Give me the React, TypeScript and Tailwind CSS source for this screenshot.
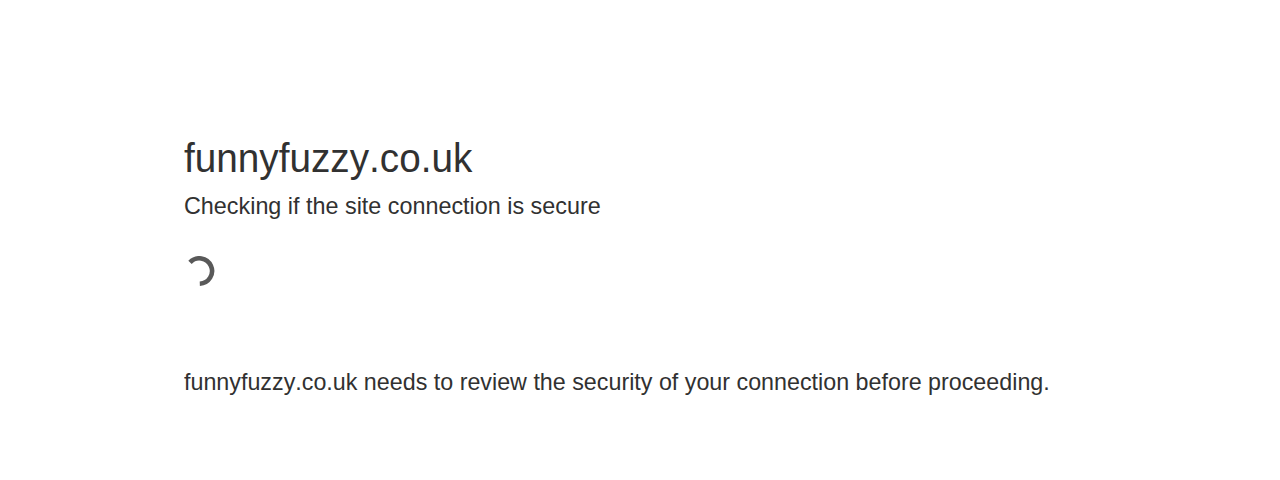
// Interstitial page shown while the connection is being verified

const HOST = 'funnyfuzzy.co.uk';

function Spinner() {
  return (
    <svg width="32" height="30" viewBox="0 0 32 30" fill="none" role="status" aria-label="Loading">
      <path d="M6 6.4 A12.7 12.7 0 1 1 15.8 27.7" stroke="#595959" strokeWidth="4.6" />
    </svg>
  );
}

export default function App() {
  return (
    <main className="h-[480px] overflow-hidden bg-white px-[184px] pt-[129px] font-['Liberation_Sans',Arial,sans-serif] text-[#313131] [font-kerning:none]">
      <h1 className="origin-left scale-x-[0.968] text-[40px] leading-[59px]">{HOST}</h1>
      <h2 className="origin-left scale-x-[0.973] text-2xl leading-9">Checking if the site connection is secure</h2>
      <div className="mt-8 mb-[78px]">
        <Spinner />
      </div>
      <p className="origin-left scale-x-[0.97] text-2xl leading-9">
        {HOST} needs to review the security of your connection before proceeding.
      </p>
    </main>
  );
}
